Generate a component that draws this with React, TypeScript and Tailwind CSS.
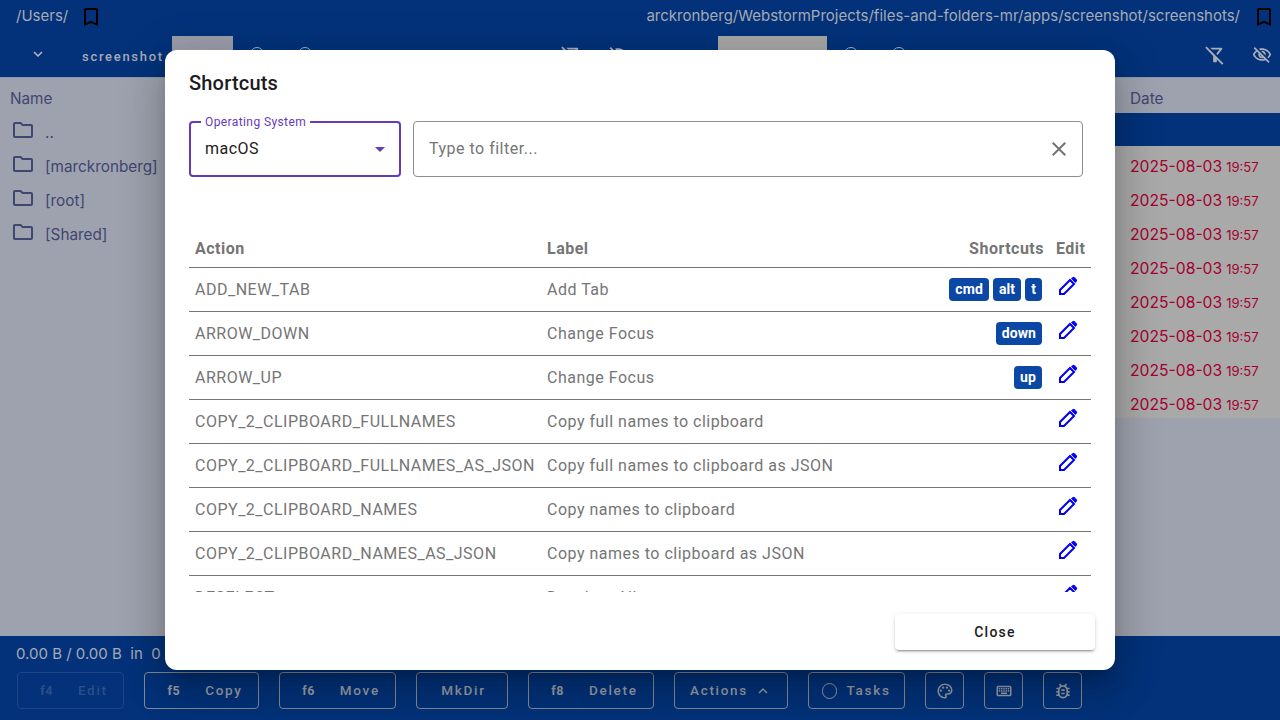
import React from "react";
import {
  MdBookmarkBorder,
  MdExpandMore,
  MdExpandLess,
  MdOutlineVisibilityOff,
  MdOutlineFolder,
  MdClose,
  MdOutlinePalette,
  MdOutlineKeyboard,
  MdOutlineBugReport,
} from "react-icons/md";

const rows: [string, string, string[]][] = [
  ["ADD_NEW_TAB", "Add Tab", ["cmd", "alt", "t"]],
  ["ARROW_DOWN", "Change Focus", ["down"]],
  ["ARROW_UP", "Change Focus", ["up"]],
  ["COPY_2_CLIPBOARD_FULLNAMES", "Copy full names to clipboard", []],
  ["COPY_2_CLIPBOARD_FULLNAMES_AS_JSON", "Copy full names to clipboard as JSON", []],
  ["COPY_2_CLIPBOARD_NAMES", "Copy names to clipboard", []],
  ["COPY_2_CLIPBOARD_NAMES_AS_JSON", "Copy names to clipboard as JSON", []],
  ["DESELECT", "Deselect All", []],
];

function FilterOff() {
  return (
    <svg width="22" height="22" viewBox="0 0 24 24" fill="currentColor">
      <path d="M16.95 6l-3.57 4.55 1.43 1.43c1.03-1.31 4.98-6.37 4.98-6.37C20.3 4.95 19.83 4 19 4H6.83l2 2H16.95z" />
      <path d="M2.81 2.81 1.39 4.22 10 13v6c0 .55.45 1 1 1h2c.55 0 1-.45 1-1v-2.17l5.78 5.78 1.41-1.41L2.81 2.81z" />
    </svg>
  );
}

function PencilIcon() {
  return (
    <svg width="20" height="20" viewBox="0 0 20 20" className="text-[#0000ee]">
      <path d="M2 14 L12 4 L16 8 L6 18 L2 18 Z" fill="none" stroke="currentColor" strokeWidth="2" strokeLinejoin="miter" />
      <path d="M13 2.6 L15 1 Q15.8 .6 16.5 1.2 L18.8 3.5 Q19.4 4.2 19 5 L17.4 7 Z" fill="currentColor" />
    </svg>
  );
}

function Circle() {
  return <span className="w-[14px] h-[14px] rounded-full border-[1.5px] border-[#a9aeb8] shrink-0" />;
}

function Btn({ w, children, disabled }: { w: string; children: React.ReactNode; disabled?: boolean }) {
  return (
    <div className={`${w} h-[37px] rounded border flex items-center justify-center text-[13.5px] font-medium tracking-[1.7px] ${disabled ? "border-[#1d4585] text-[#2c4f86]" : "border-[#858a93] text-[#989da7]"}`}>
      {children}
    </div>
  );
}

function Fkey({ k, label }: { k: string; label: string }) {
  return (
    <span className="flex items-baseline pl-[7px]">
      <span className="text-[12.5px] font-bold tracking-[0.5px] mr-[25px]">{k}</span>
      <span>{label}</span>
    </span>
  );
}

export default function App() {
  return (
    <div className="relative w-[1280px] h-[720px] overflow-hidden bg-[#9ea2ae] font-['Roboto',sans-serif]">
      <div className="flex flex-col h-full">
        <div className="h-[78px] bg-[#03327a] border-b border-[#8f95a3] shrink-0">
          <div className="h-[33px] mb-[3px] flex items-center justify-between pr-[4px] text-[15px] font-['Inter',sans-serif] text-[#a6abb5]">
            <div className="flex items-center pl-[16px]">
              <span>/Users/</span>
              <MdBookmarkBorder size={24} className="ml-[11px] text-black" />
            </div>
            <div className="flex items-center">
              <div className="w-[593px] overflow-hidden flex justify-end whitespace-nowrap">
                <span>marckronberg/WebstormProjects/files-and-folders-mr/apps/screenshot/screenshots/</span>
              </div>
              <MdBookmarkBorder size={24} className="ml-[12px] text-black" />
            </div>
          </div>
          <div className="h-[41px] flex">
            <div className="w-[640px] flex items-center pr-[12px]">
              <MdExpandMore size={18} className="ml-[29px] mb-[6px] text-[#b6bac2]" />
              <span className="ml-[35px] mt-[1px] w-[81px] whitespace-nowrap text-[13px] font-medium tracking-[1.7px] text-[#a6abb5]">screenshot</span>
              <div className="ml-[9px] w-[61px] h-[41px] bg-[#9a9ca9] shrink-0" />
              <div className="ml-[17px] mb-[5px] flex gap-[34px]"><Circle /><Circle /></div>
              <div className="ml-auto mb-[3px] flex items-center gap-[26px] text-[#a9aeb8]">
                <FilterOff />
                <MdOutlineVisibilityOff size={20} />
              </div>
            </div>
            <div className="w-[640px] flex items-center pr-[8px]">
              <div className="ml-[78px] w-[109px] h-[41px] bg-[#a6a6a6] shrink-0" />
              <div className="ml-[17px] mb-[5px] flex gap-[34px]"><Circle /><Circle /></div>
              <div className="ml-auto mb-[3px] flex items-center gap-[26px] text-[#a9aeb8]">
                <FilterOff />
                <MdOutlineVisibilityOff size={20} />
              </div>
            </div>
          </div>
        </div>
        <div className="flex-1 flex min-h-0 font-['Inter',sans-serif]">
          <div className="w-[640px] text-[15.3px] text-[#3f4670]">
            <div className="h-[35px] pl-[10px] flex items-center"><span className="mt-[8px]">Name</span></div>
            {["..", "[marckronberg]", "[root]", "[Shared]"].map((n) => (
              <div key={n} className="h-[34px] pl-[11px] flex items-center">
                <MdOutlineFolder size={24} className="mr-[10px]" />
                <span className="mt-[6px]">{n}</span>
              </div>
            ))}
          </div>
          <div className="flex-1">
            <div className="h-[35px] pl-[490px] flex items-center text-[15.3px] text-[#3f4670]"><span className="mt-[8px]">Date</span></div>
            <div className="h-[33px] bg-[#03327a]" />
            <div className="h-[272px] overflow-hidden bg-[#a9a9a9]">
              {Array.from({ length: 8 }).map((_, i) => (
                <div key={i} className="h-[34px] pl-[490px] flex items-center text-[#a5012d] whitespace-nowrap">
                  <div className="mt-[8px] flex items-baseline gap-[4px]">
                    <span className="text-[15.7px]">2025-08-03</span>
                    <span className="text-[13px]">19:57</span>
                  </div>
                </div>
              ))}
            </div>
          </div>
        </div>
        <div className="h-[84px] bg-[#03327a] shrink-0 px-[16px]">
          <div className="h-[36px] flex items-center text-[15px] font-['Inter',sans-serif] text-[#a6abb5]">0.00 B / 0.00 B&nbsp; in&nbsp; 0</div>
          <div className="flex items-center gap-[20px] pl-[1px]">
            <Btn w="w-[107px]" disabled><Fkey k="f4" label="Edit" /></Btn>
            <Btn w="w-[115px]"><Fkey k="f5" label="Copy" /></Btn>
            <Btn w="w-[117px]"><Fkey k="f6" label="Move" /></Btn>
            <Btn w="w-[92px]"><span className="pl-[3px]">MkDir</span></Btn>
            <Btn w="w-[126px]"><Fkey k="f8" label="Delete" /></Btn>
            <Btn w="w-[114px]">Actions<MdExpandLess size={18} className="ml-[6px]" /></Btn>
            <Btn w="w-[97px]"><span className="w-[15px] h-[16px] rounded-full border-[1.5px] border-[#989da7] mr-[9px]" />Tasks</Btn>
            <Btn w="w-[39px]"><MdOutlinePalette size={18} /></Btn>
            <Btn w="w-[39px]"><MdOutlineKeyboard size={18} /></Btn>
            <Btn w="w-[39px]"><MdOutlineBugReport size={20} /></Btn>
          </div>
        </div>
      </div>

      <div className="absolute left-[165px] top-[50px] w-[950px] h-[620px] bg-white rounded-[12px] flex flex-col shadow-[0_11px_15px_-7px_rgba(0,0,0,0.2),0_24px_38px_3px_rgba(0,0,0,0.14),0_9px_46px_8px_rgba(0,0,0,0.12)]">
        <div className="pl-[24px] pt-[19px] h-[71px] text-[20px] font-medium text-[#1d1b20] tracking-[0.2px] leading-[28px]">Shortcuts</div>
        <div className="flex gap-[12px] pl-[24px] pr-[32px] shrink-0">
          <div className="relative w-[212px] h-[56px] rounded border-2 border-[#673ab7] pl-[14px] pr-[14px] flex items-center justify-between text-[16px] tracking-[0.5px] text-[#1d1b20]">
            <span className="absolute -top-[8px] left-[10px] px-[4px] bg-white text-[12px] leading-[14px] text-[#673ab7] tracking-[0.4px]">Operating System</span>
            <span>macOS</span>
            <span className="w-0 h-0 border-x-[5px] border-x-transparent border-t-[5px] border-t-[#673ab7]" />
          </div>
          <div className="flex-1 h-[56px] rounded border border-[#8e8e8e] pl-[15px] pr-[11px] flex items-center justify-between text-[16px] tracking-[0.5px] text-[#757575]">
            <span>Type to filter...</span>
            <MdClose size={24} className="text-[#757575]" />
          </div>
        </div>
        <div className="mt-[50px] ml-[24px] w-[902px] h-[365px] overflow-hidden shrink-0">
          <div className="h-[41px] pt-[4px] border-b border-[#757575] flex items-center text-[16px] font-bold tracking-[0.5px] text-[#757575]">
            <span className="w-[358px] pl-[6px]">Action</span>
            <span className="flex-1">Label</span>
            <span className="mr-[12px]">Shortcuts</span>
            <span className="w-[35px]">Edit</span>
          </div>
          {rows.map(([a, l, s]) => (
            <div key={a} className="h-[44px] border-b border-[#757575] flex items-center text-[16px] tracking-[0.5px] text-[#757575]">
              <span className="w-[358px] pl-[6px] whitespace-nowrap">{a}</span>
              <span className="flex-1">{l}</span>
              <div className="flex gap-[4px] mr-[14px]">
                {s.map((k) => (
                  <span key={k} className="h-[23px] px-[6px] rounded-[4px] bg-[#0b47a5] text-white text-[14px] font-bold tracking-[0.1px] flex items-center">{k}</span>
                ))}
              </div>
              <div className="w-[35px] pl-[2px] -mt-[7px]">
                <PencilIcon />
              </div>
            </div>
          ))}
        </div>
        <div className="flex-1 flex items-start justify-end pr-[20px] pt-[22px]">
          <div className="w-[200px] h-[36px] rounded bg-white flex items-center justify-center text-[14px] font-medium tracking-[1.25px] text-[#1d1b20] shadow-[0_3px_1px_-2px_rgba(0,0,0,0.2),0_2px_2px_0_rgba(0,0,0,0.14),0_1px_5px_0_rgba(0,0,0,0.12)]">Close</div>
        </div>
      </div>
    </div>
  );
}
